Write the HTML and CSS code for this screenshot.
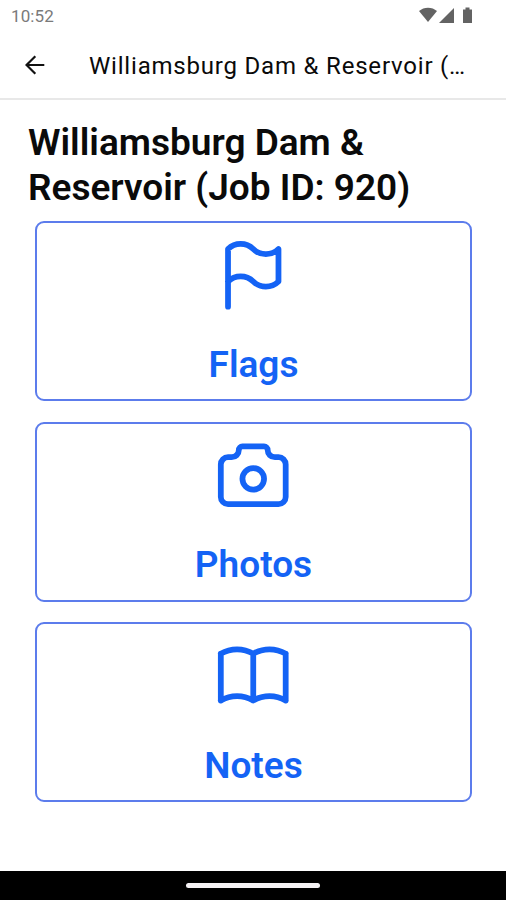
FILE: index.html
```html
<!DOCTYPE html>
<html lang="en">
<head>
  <meta charset="UTF-8">
  <meta name="viewport" content="width=device-width, initial-scale=1.0">
  <title>Williamsburg Dam &amp; Reservoir</title>
  <link rel="stylesheet" href="styles.css">
</head>
<body>
  <div class="screen">
    <div class="status-bar">
      <span class="time">10:52</span>
      <svg class="status-icons" width="56" height="18" viewBox="0 0 56 18">
        <path d="M0 4C5 -.5 13 -.5 18 4L9 15z"/>
        <path d="M35 1v15H20z"/>
        <path d="M44 2.500h2.500V.5h4v2H53V16h-9z"/>
      </svg>
    </div>

    <header class="app-bar">
      <svg class="back" width="20" height="20" viewBox="0 0 20 20">
        <path d="M19.300 10H2M10.300 1.200L1.500 10l8.800 8.800"/>
      </svg>
      <div class="app-title">Williamsburg Dam &amp; Reservoir (…</div>
    </header>

    <main class="content">
      <h1 class="title">Williamsburg Dam &amp; Reservoir (Job ID: 920)</h1>
      <div class="cards">
        <a class="card">
          <svg class="icon" viewBox="0 0 24 24">
            <path d="M5 21V5a5 5 0 0 1 7 0a5 5 0 0 0 7 0v9a5 5 0 0 1 -7 0a5 5 0 0 0 -7 0"/>
          </svg>
          <span class="label">Flags</span>
        </a>
        <a class="card">
          <svg class="icon" viewBox="0 0 24 24">
            <path d="M5 7h1a2 2 0 0 0 2 -2a1 1 0 0 1 1 -1h6a1 1 0 0 1 1 1a2 2 0 0 0 2 2h1a2 2 0 0 1 2 2v9a2 2 0 0 1 -2 2h-14a2 2 0 0 1 -2 -2v-9a2 2 0 0 1 2 -2z"/>
            <circle cx="12" cy="13" r="3"/>
          </svg>
          <span class="label">Photos</span>
        </a>
        <a class="card">
          <svg class="icon" viewBox="0 0 24 24">
            <path d="M3 19a9 9 0 0 1 9 0a9 9 0 0 1 9 0M3 6a9 9 0 0 1 9 0a9 9 0 0 1 9 0M3 6v13M12 6v13M21 6v13"/>
          </svg>
          <span class="label">Notes</span>
        </a>
      </div>
    </main>

    <div class="nav-bar"><div class="handle"></div></div>
  </div>
</body>
</html>
```

FILE: styles.css
```css
body {
  font-family: Roboto, sans-serif;
  background-color: #ffffff;
  color: #0a0a0a;
  margin: 0;
}
.screen {
  display: flex;
  flex-direction: column;
  height: 900px;
  overflow: hidden;
}
.status-bar {
  display: flex;
  justify-content: space-between;
  align-items: center;
  height: 31px;
  padding: 0 31px 0 11px;
}
.time {
  font-size: 17px;
  letter-spacing: 0.1px;
  color: #7a7a7a;
}
.status-icons {
  fill: #636363;
}
.app-bar {
  display: flex;
  align-items: center;
  height: 67px;
  padding-left: 25px;
  border-bottom: 2px solid #e8e8e8;
}
.back {
  fill: none;
  stroke: #111111;
  stroke-width: 2.2;
}
.app-title {
  margin-left: 44px;
  padding-top: 2px;
  font-size: 24px;
  letter-spacing: 0.8px;
  white-space: nowrap;
}
.content {
  flex: 1;
  padding: 20px 28px 0;
}
.title {
  margin: 0;
  font-size: 37px;
  font-weight: 600;
  line-height: 45px;
}
.cards {
  display: flex;
  flex-direction: column;
  gap: 20.500px;
  padding: 11px 6px 0 7px;
}
.card {
  box-sizing: border-box;
  display: flex;
  flex-direction: column;
  align-items: center;
  height: 180px;
  padding-top: 8px;
  border: 2px solid #5c7cec;
  border-radius: 9px;
  color: #1463f5;
}
.icon {
  width: 86.500px;
  height: 86.500px;
  fill: none;
  stroke: currentColor;
  stroke-width: 1.600;
  stroke-linecap: round;
  stroke-linejoin: round;
}
.label {
  margin-top: 24px;
  font-size: 37px;
  font-weight: 600;
  line-height: 45px;
}
.nav-bar {
  display: flex;
  justify-content: center;
  align-items: center;
  height: 29px;
  background-color: #000000;
}
.handle {
  width: 134px;
  height: 5px;
  border-radius: 3px;
  background-color: #f5f2f4;
}
```
